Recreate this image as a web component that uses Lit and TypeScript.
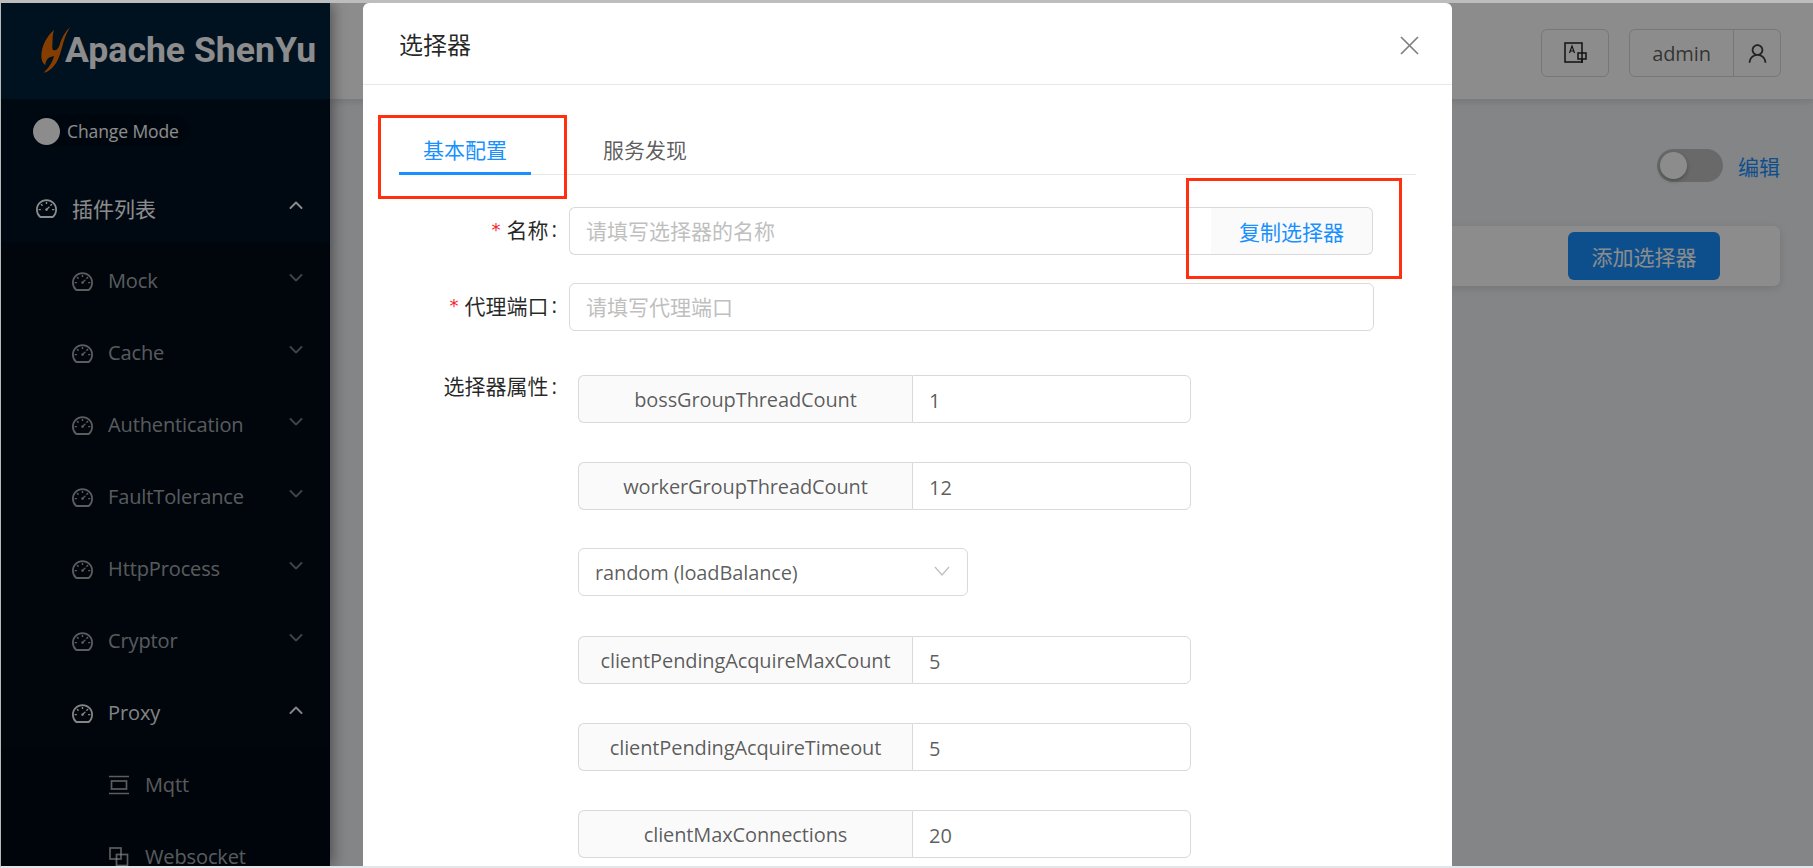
import { LitElement, html, css, svg } from "lit";
import { customElement } from "lit/decorators.js";

const gauge = svg`<path d="M924.8 385.6a446.7 446.7 0 0 0-96-142.4 446.7 446.7 0 0 0-142.4-96C631.1 123.8 572.5 112 512 112s-119.1 11.8-174.4 35.2a446.7 446.7 0 0 0-142.4 96 446.7 446.7 0 0 0-96 142.4C75.8 440.9 64 499.5 64 560c0 132.7 58.3 257.7 159.9 343.1l1.7 1.4c5.8 4.8 13.1 7.5 20.6 7.5h531.7c7.5 0 14.8-2.7 20.6-7.5l1.7-1.4C901.7 817.7 960 692.7 960 560c0-60.5-11.9-119.1-35.2-174.4zM761.4 836H262.6A371.12 371.12 0 0 1 140 560c0-99.4 38.7-192.8 109-263 70.3-70.3 163.7-109 263-109 99.4 0 192.8 38.7 263 109 70.3 70.3 109 163.7 109 263 0 105.6-44.5 205.5-122.6 276zM623.5 421.5a8.03 8.03 0 0 0-11.3 0L527.7 506c-18.7-5-39.4-.2-54.1 14.5a55.95 55.95 0 0 0 0 79.2 55.95 55.95 0 0 0 79.2 0 55.83 55.83 0 0 0 14.5-54.1l84.5-84.5c3.1-3.1 3.1-8.2 0-11.3l-28.3-28.3zM490 320h44c4.4 0 8-3.6 8-8v-80c0-4.4-3.6-8-8-8h-44c-4.4 0-8 3.6-8 8v80c0 4.4 3.6 8 8 8zm260 218v44c0 4.4 3.6 8 8 8h80c4.4 0 8-3.6 8-8v-44c0-4.4-3.6-8-8-8h-80c-4.4 0-8 3.6-8 8zm12.7-197.2l-31.1-31.1a8.03 8.03 0 0 0-11.3 0l-56.6 56.6a8.03 8.03 0 0 0 0 11.3l31.1 31.1c3.1 3.1 8.2 3.1 11.3 0l56.6-56.6c3.1-3.1 3.1-8.2 0-11.3zm-458.6-31.1a8.03 8.03 0 0 0-11.3 0l-31.1 31.1a8.03 8.03 0 0 0 0 11.3l56.6 56.6c3.1 3.1 8.2 3.1 11.3 0l31.1-31.1c3.1-3.1 3.1-8.2 0-11.3l-56.6-56.6zM262 530h-80c-4.4 0-8 3.6-8 8v44c0 4.4 3.6 8 8 8h80c4.4 0 8-3.6 8-8v-44c0-4.4-3.6-8-8-8z"/>`;
const userPath = svg`<path d="M858.5 763.6a374 374 0 0 0-80.6-119.5 375.63 375.63 0 0 0-119.5-80.6c-.4-.2-.8-.3-1.2-.5C719.5 518 760 444.7 760 362c0-137-111-248-248-248S264 225 264 362c0 82.7 40.5 156 102.8 201.1-.4.2-.8.3-1.2.5-44.8 18.9-85 46-119.5 80.6a375.63 375.63 0 0 0-80.6 119.5A371.7 371.7 0 0 0 136 901.8a8 8 0 0 0 8 8.2h60c4.4 0 7.9-3.5 8-7.8 2-77.2 33-149.5 87.8-204.3 56.7-56.7 132-87.9 212.2-87.9s155.5 31.2 212.2 87.9C779 752.7 810 825 812 902.2c.1 4.4 3.6 7.8 8 7.8h60a8 8 0 0 0 8-8.2c-1-47.8-10.9-94.3-29.5-138.2zM512 534c-45.9 0-89.1-17.9-121.6-50.4S340 407.9 340 362c0-45.9 17.9-89.1 50.4-121.6S466.1 190 512 190s89.1 17.9 121.6 50.4S684 316.1 684 362c0 45.9-17.9 89.1-50.4 121.6S557.9 534 512 534z"/>`;

const gaugeIcon = html`<svg class="mi" viewBox="64 64 896 896" fill="currentColor">${gauge}</svg>`;
const chevron = (up: boolean) => html`<svg class="chev" viewBox="0 0 14 8" fill="none" stroke="currentColor" stroke-width="1.9" stroke-linecap="round" stroke-linejoin="round"><path d=${up ? "M1.5 7 7 1.5 12.5 7" : "M1.5 1 7 6.5 12.5 1"}/></svg>`;

const subMenus = ["Mock", "Cache", "Authentication", "FaultTolerance", "HttpProcess", "Cryptor"];

type Row =
  | { kind: "field"; name: string; value: string }
  | { kind: "select"; value: string };

const rows: Row[] = [
  { kind: "field", name: "bossGroupThreadCount", value: "1" },
  { kind: "field", name: "workerGroupThreadCount", value: "12" },
  { kind: "select", value: "random (loadBalance)" },
  { kind: "field", name: "clientPendingAcquireMaxCount", value: "5" },
  { kind: "field", name: "clientPendingAcquireTimeout", value: "5" },
  { kind: "field", name: "clientMaxConnections", value: "20" },
];

@customElement("app-root")
export class AppRoot extends LitElement {
  static styles = css`
    :host {
      display: block;
      width: 1813px;
      height: 868px;
      font-family: "Open Sans", "Noto Sans CJK SC", sans-serif;
      font-size: 21px;
      color: rgba(0, 0, 0, 0.65);
    }
    * { box-sizing: border-box; }
    .lat { font-size: 20px; letter-spacing: -0.12px; }
    .frame {
      position: relative;
      width: 1813px;
      height: 868px;
      overflow: hidden;
      background: #e3e6e8;
      border-top: 3px solid #bdbdbd;
      border-left: 1px solid #b8b8b8;
      border-bottom: 2px solid #e3e6e8;
      display: flex;
    }
    .sidebar {
      width: 329px;
      flex: none;
      background: #001529;
      box-shadow: 2px 0 14px rgba(0, 0, 0, 0.45);
      position: relative;
      z-index: 2;
      color: rgba(255, 255, 255, 0.65);
    }
    .brand {
      height: 96px;
      display: flex;
      align-items: center;
      padding-left: 29px;
      background: #001f3b;
    }
    .logo { width: 60px; height: 60px; margin: -2px -25px 0 0; flex: none; }
    .brand-text {
      font-family: Roboto, "Liberation Sans", sans-serif;
      font-weight: 700;
      font-size: 35.6px;
      color: #fff;
      margin-top: -3px;
      white-space: nowrap;
    }
    .nav { height: 800px; background: #00101f; }
    .mode {
      padding: 16px 0 31px 32px;
      display: flex;
    }
    .pill {
      display: flex;
      align-items: center;
      height: 32px;
      width: 156px;
      border-radius: 16px;
      background: #000c18;
      color: #fff;
      font-size: 17.5px;
      letter-spacing: -0.1px;
      white-space: nowrap;
    }
    .knob {
      width: 27px;
      height: 27px;
      border-radius: 50%;
      background: #fff;
      margin-right: 7px;
      flex: none;
    }
    .item {
      height: 60px;
      display: flex;
      align-items: center;
      white-space: nowrap;
      padding-right: 27px;
    }
    .item .label { flex: 1; }
    .item .label.lat { margin-top: -2px; }
    .top { padding-left: 35px; margin-bottom: 5px; color: #fff; }
    .mi { width: 21px; height: 21px; flex: none; margin-right: 15px; }
    .chev { width: 14px; height: 8px; flex: none; margin-top: -6px; }
    .sub { background: #000c17; padding-top: 8px; }
    .sub .item { padding-left: 71px; margin-bottom: 12px; color: rgba(255, 255, 255, 0.65); }
    .sub .item .chev { opacity: 0.7; }
    .sub .item.open { color: rgba(255, 255, 255, 0.95); margin-bottom: 4px; }
    .sub .item.open .chev { opacity: 1; }
    .third { background: #000a14; padding-top: 8px; }
    .third .item { padding-left: 107px; }
    .ti {
      width: 22px;
      height: 22px;
      flex: none;
      margin-right: 15px;
      fill: none;
      stroke: currentColor;
      stroke-width: 1.7;
    }

    .main { flex: 1; min-width: 0; background: #f0f2f5; }
    .header {
      height: 96px;
      background: #fff;
      box-shadow: 0 2px 8px rgba(0, 0, 0, 0.12);
      display: flex;
      justify-content: flex-end;
      align-items: flex-start;
      gap: 20px;
      padding: 26px 32px 0 0;
    }
    .hbtn {
      height: 48px;
      border: 1px solid #d9d9d9;
      border-radius: 6px;
      display: flex;
      align-items: center;
      justify-content: center;
    }
    .lang { width: 68px; }
    .lang svg { width: 24px; height: 24px; fill: none; stroke: #1f1f1f; stroke-width: 1.5; }
    .user { width: 152px; }
    .user span { flex: 1; text-align: center; color: rgba(0, 0, 0, 0.65); }
    .ubox {
      width: 47px;
      height: 100%;
      border-left: 1px solid #d9d9d9;
      display: flex;
      align-items: center;
      justify-content: center;
    }
    .ubox svg { width: 21px; height: 21px; fill: rgba(0, 0, 0, 0.75); }
    .content { padding: 50px 33px 0 0; }
    .toolbar {
      display: flex;
      justify-content: flex-end;
      align-items: center;
      height: 33px;
      gap: 15px;
      color: #1890ff;
    }
    .switch {
      width: 66px;
      height: 33px;
      border-radius: 17px;
      background: #bfbfbf;
      padding: 3px;
    }
    .switch i {
      display: block;
      width: 27px;
      height: 27px;
      border-radius: 50%;
      background: #fff;
      box-shadow: 0 2px 4px rgba(0, 35, 11, 0.3);
    }
    .card {
      margin: 44px 0 0 80px;
      height: 60px;
      background: #fff;
      border-radius: 6px;
      box-shadow: 0 2px 8px rgba(0, 0, 0, 0.12);
      display: flex;
      justify-content: flex-end;
      padding: 6px 60px 0 0;
    }
    .primary {
      width: 152px;
      height: 48px;
      border-radius: 6px;
      background: #1890ff;
      color: #fff;
      display: flex;
      align-items: center;
      justify-content: center;
      white-space: nowrap;
    }

    .mask {
      position: absolute;
      inset: 0;
      background: rgba(0, 0, 0, 0.45);
      z-index: 5;
    }
    .modal {
      position: absolute;
      left: 362px;
      top: 0;
      width: 1089px;
      height: 900px;
      background: #fff;
      border-radius: 6px 6px 0 0;
      z-index: 6;
    }
    .mhead {
      height: 82px;
      border-bottom: 1px solid #e8e8e8;
      display: flex;
      align-items: center;
      justify-content: space-between;
      padding: 0 33px 0 36px;
      color: rgba(0, 0, 0, 0.85);
      font-size: 24px;
    }
    .close { width: 19px; height: 19px; fill: none; stroke: rgba(0, 0, 0, 0.5); stroke-width: 1.7; margin-top: 4px; }
    .mbody { padding: 24px 36px 0; }
    .tabs {
      display: flex;
      gap: 48px;
      height: 66px;
      border-bottom: 1px solid #e8e8e8;
    }
    .tab {
      padding: 20px 24px 3px;
      height: 66px;
      display: flex;
      align-items: center;
      border-bottom: 3px solid transparent;
    }
    .tab.active { color: #1890ff; border-bottom-color: #1890ff; }
    .form { margin-top: 32px; display: flex; flex-direction: column; }
    .frow { display: flex; align-items: flex-start; }
    .frow + .frow { margin-top: 28px; }
    .frow.attrs { margin-top: 44px; }
    .flabel {
      width: 170px;
      flex: none;
      padding: 0 12px 4px 0;
      height: 48px;
      display: flex;
      align-items: center;
      justify-content: flex-end;
      color: rgba(0, 0, 0, 0.85);
      white-space: nowrap;
    }
    .attrs .flabel { height: 24px; margin-top: -1px; padding-bottom: 0; line-height: 24px; }
    .star {
      color: #f5222d;
      font-family: "DejaVu Sans", sans-serif;
      font-size: 18px;
      margin-right: 6px;
    }
    .colon { margin-left: 3px; }
    .group { width: 804px; height: 48px; display: flex; }
    input {
      font: inherit;
      color: rgba(0, 0, 0, 0.65);
      height: 48px;
      width: 100%;
      min-width: 0;
      padding: 0 16px;
      border: 1px solid #d9d9d9;
      border-radius: 6px;
      outline: none;
      background: #fff;
    }
    input::placeholder { color: #bfbfbf; opacity: 1; }
    .group input { border-radius: 6px 0 0 6px; border-right: 0; width: 642px; flex: none; }
    .copy {
      flex: 1;
      background: #fafafa;
      border: 1px solid #d9d9d9;
      border-left: 0;
      border-radius: 0 6px 6px 0;
      color: #1890ff;
      display: flex;
      align-items: center;
      justify-content: center;
      white-space: nowrap;
    }
    .single { width: 805px; }
    .list { display: flex; flex-direction: column; gap: 39px; margin-left: 9px; }
    .pair { display: flex; width: 613px; height: 48px; }
    .pair .k {
      width: 334px;
      flex: none;
      background: #fafafa;
      border: 1px solid #d9d9d9;
      border-right: 0;
      border-radius: 6px 0 0 6px;
      display: flex;
      align-items: center;
      justify-content: center;
      white-space: nowrap;
    }
    .pair input { border-radius: 0 6px 6px 0; padding-top: 3px; font-size: 20px; }
    .sel {
      width: 390px;
      height: 48px;
      margin: -1px 0 1px;
      border: 1px solid #d9d9d9;
      border-radius: 6px;
      display: flex;
      align-items: center;
      justify-content: space-between;
      padding: 0 17px 0 16px;
    }
    .sel svg { width: 16px; height: 10px; fill: none; stroke: #bfbfbf; stroke-width: 1.3; margin-top: -2px; }

    .note {
      position: absolute;
      border: 3px solid #ff3010;
      z-index: 7;
      pointer-events: none;
    }
    .n1 { left: 377px; top: 112px; width: 189px; height: 84px; }
    .n2 { left: 1185px; top: 175px; width: 216px; height: 101px; }
  `;

  private renderRow(r: Row) {
    if (r.kind === "select") {
      return html`<div class="sel"><span class="lat">${r.value}</span>
        <svg viewBox="0 0 16 10"><path d="M1 1l7 8 7-8"/></svg></div>`;
    }
    return html`<div class="pair"><div class="k lat">${r.name}</div><input .value=${r.value} /></div>`;
  }

  render() {
    return html`
      <div class="frame">
        <aside class="sidebar">
          <div class="brand">
            <svg class="logo" viewBox="0 0 180 180">
              <path fill="#f57200" d="M72 30C50 48 34 80 34 108c0 12 4 22 12 28 0-10 5-20 13-24l13-4c-4 18-16 36-31 50 16-2 36-20 46-47 10-24 14-62 34-90-16 14-27 34-33 56-3 8-8 13-14 14-6 0-8-4-7-14 1-18 0-32 5-47z"/>
            </svg>
            <span class="brand-text">Apache ShenYu</span>
          </div>
          <div class="nav">
            <div class="mode"><div class="pill"><span class="knob"></span>Change Mode</div></div>
            <div class="item top">${gaugeIcon}<span class="label">插件列表</span>${chevron(true)}</div>
            <div class="sub">
              ${subMenus.map((m) => html`<div class="item">${gaugeIcon}<span class="label lat">${m}</span>${chevron(false)}</div>`)}
              <div class="item open">${gaugeIcon}<span class="label lat">Proxy</span>${chevron(true)}</div>
              <div class="third">
                <div class="item">
                  <svg class="ti" viewBox="0 0 22 22"><path d="M1 2.500h20M1 19.500h20"/><rect x="3.500" y="7" width="15" height="8"/></svg>
                  <span class="label lat">Mqtt</span>
                </div>
                <div class="item">
                  <svg class="ti" viewBox="0 0 22 22"><rect x="2" y="2" width="11" height="11"/><rect x="8.500" y="8.500" width="11" height="11"/></svg>
                  <span class="label lat">Websocket</span>
                </div>
              </div>
            </div>
          </div>
        </aside>
        <main class="main">
          <header class="header">
            <div class="hbtn lang">
              <svg viewBox="0 0 24 24">
                <path d="M19 9V2H2v19h17v-3"/>
                <path d="M6.500 12 9 5l2.500 7M7.500 10h3" stroke-width="1.100"/>
                <rect x="15" y="12" width="8" height="6"/>
                <path d="M19 9v13"/>
              </svg>
            </div>
            <div class="hbtn user">
              <span class="lat">admin</span>
              <div class="ubox"><svg viewBox="64 64 896 896">${userPath}</svg></div>
            </div>
          </header>
          <div class="content">
            <div class="toolbar"><div class="switch"><i></i></div><span>编辑</span></div>
            <div class="card"><div class="primary">添加选择器</div></div>
          </div>
        </main>
        <div class="mask"></div>
        <section class="modal">
          <div class="mhead">
            <span>选择器</span>
            <svg class="close" viewBox="0 0 19 19"><path d="M1 1l17 17M18 1 1 18"/></svg>
          </div>
          <div class="mbody">
            <div class="tabs">
              <div class="tab active">基本配置</div>
              <div class="tab">服务发现</div>
            </div>
            <div class="form">
              <div class="frow">
                <div class="flabel"><span class="star">*</span>名称<span class="colon">:</span></div>
                <div class="group">
                  <input placeholder="请填写选择器的名称" />
                  <div class="copy">复制选择器</div>
                </div>
              </div>
              <div class="frow">
                <div class="flabel"><span class="star">*</span>代理端口<span class="colon">:</span></div>
                <div class="single"><input placeholder="请填写代理端口" /></div>
              </div>
              <div class="frow attrs">
                <div class="flabel">选择器属性<span class="colon">:</span></div>
                <div class="list">${rows.map((r) => this.renderRow(r))}</div>
              </div>
            </div>
          </div>
        </section>
        <div class="note n1"></div>
        <div class="note n2"></div>
      </div>
    `;
  }
}
